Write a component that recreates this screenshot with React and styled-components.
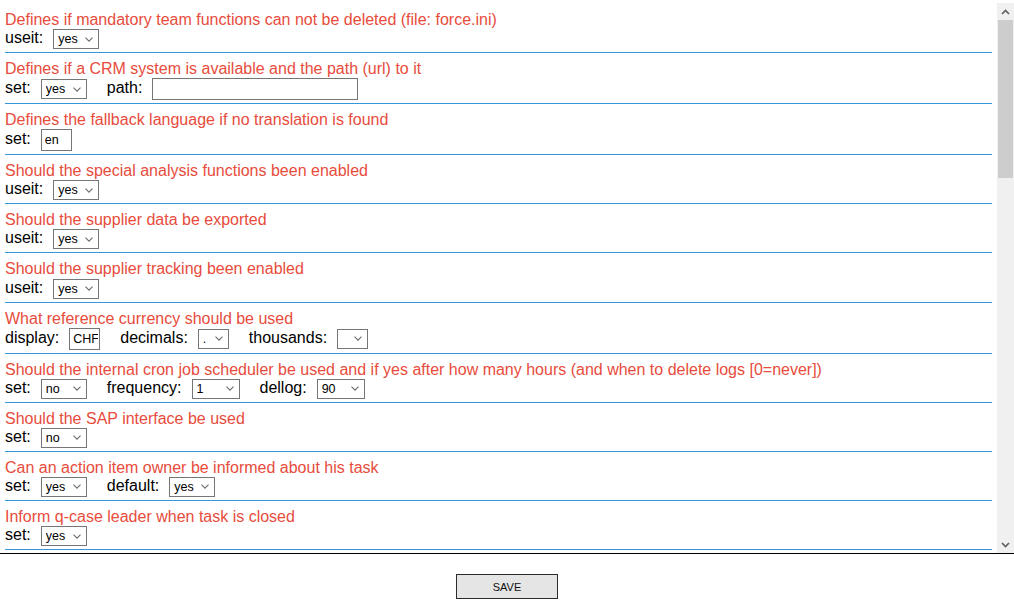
import React from "react";
import styled, { createGlobalStyle } from "styled-components";

const GlobalStyle = createGlobalStyle`
  html, body { margin: 0; padding: 0; background: #fff; }
  body { font-family: "Liberation Sans", Arial, sans-serif; }
`;

const CHEVRON = `url("data:image/svg+xml,${encodeURIComponent(
  "<svg xmlns='http://www.w3.org/2000/svg' width='8' height='5' viewBox='0 0 8 5'><path d='M0.5 0.6 L4 4.1 L7.5 0.6' fill='none' stroke='#6b6b6b' stroke-width='1.1'/></svg>"
)}")`;

const Page = styled.div`
  padding-top: 3px;
  width: 1014px;
`;

const Main = styled.div`
  display: flex;
  height: 550px;
  border-bottom: 1px solid #000;
`;

const ScrollArea = styled.div`
  flex: 1;
  min-width: 0;
  overflow: hidden;
  padding: 1px 5px 0;
`;

const Scrollbar = styled.div`
  width: 17px;
  flex: none;
  display: flex;
  flex-direction: column;
  background: #f0f0f0;
`;

const ScrollButton = styled.div`
  height: 17px;
  display: flex;
  align-items: center;
  justify-content: center;
  color: #606060;
`;

const Thumb = styled.div`
  height: 158px;
  margin: 0 1px;
  background: #cdcdcd;
`;

const Track = styled.div`
  flex: 1;
`;

const Row = styled.div`
  padding: 7px 0 3px;
  border-bottom: 1px solid #3498db;
`;

const Title = styled.div`
  font-size: 16px;
  line-height: 18.1px;
  color: #e74c3c;
  white-space: nowrap;
`;

const Controls = styled.div`
  display: flex;
  align-items: baseline;
  gap: 20px;
`;

const Field = styled.div`
  display: inline-flex;
  align-items: baseline;
  gap: 10px;
`;

const Label = styled.span`
  font-size: 16px;
  line-height: 18px;
  color: #000;
`;

const Select = styled.select`
  box-sizing: border-box;
  appearance: none;
  -webkit-appearance: none;
  width: ${(p) => p.$w}px;
  height: 20px;
  margin: 0;
  padding: 0 14px 0 4px;
  font: 12.5px "Liberation Sans", Arial, sans-serif;
  color: #000;
  background-color: #fff;
  background-image: ${CHEVRON};
  background-repeat: no-repeat;
  background-position: right 5px center;
  background-size: 8px 5px;
  border: 1px solid #767676;
  border-radius: 0;
  outline: none;
`;

const TextInput = styled.input`
  box-sizing: border-box;
  width: ${(p) => p.$w}px;
  height: 22px;
  margin: 0;
  padding: 1px 1px 1px 3px;
  font: 12.5px "Liberation Sans", Arial, sans-serif;
  color: #000;
  background: #fff;
  border: 1px solid #767676;
  border-radius: 0;
  outline: none;
`;

const Footer = styled.div`
  display: flex;
  justify-content: center;
  padding-top: 20px;
`;

const SaveButton = styled.button`
  box-sizing: border-box;
  width: 102px;
  height: 25px;
  margin: 0;
  padding: 0;
  font: 11px "Liberation Sans", Arial, sans-serif;
  color: #111;
  background: #e5e5e5;
  border: 1px solid #2b2b2b;
  border-radius: 0;
`;

const YN = ["yes", "no"];
const sel = (label, value, w = 46, options = YN) => ({ label, kind: "select", value, w, options });
const inp = (label, value, w) => ({ label, kind: "input", value, w });

const rows = [
  { title: "Defines if mandatory team functions can not be deleted (file: force.ini)", fields: [sel("useit:", "yes")] },
  { title: "Defines if a CRM system is available and the path (url) to it", fields: [sel("set:", "yes"), inp("path:", "", 206)] },
  { title: "Defines the fallback language if no translation is found", fields: [inp("set:", "en", 31)] },
  { title: "Should the special analysis functions been enabled", fields: [sel("useit:", "yes")] },
  { title: "Should the supplier data be exported", fields: [sel("useit:", "yes")] },
  { title: "Should the supplier tracking been enabled", fields: [sel("useit:", "yes")] },
  {
    title: "What reference currency should be used",
    fields: [inp("display:", "CHF", 31), sel("decimals:", ".", 31, [".", ","]), sel("thousands:", "", 31, ["", "'", ",", "."])],
  },
  {
    title: "Should the internal cron job scheduler be used and if yes after how many hours (and when to delete logs [0=never])",
    fields: [sel("set:", "no"), sel("frequency:", "1", 48, ["1", "2", "4", "6", "12", "24"]), sel("dellog:", "90", 48, ["0", "30", "60", "90"])],
  },
  { title: "Should the SAP interface be used", fields: [sel("set:", "no")] },
  { title: "Can an action item owner be informed about his task", fields: [sel("set:", "yes"), sel("default:", "yes")] },
  { title: "Inform q-case leader when task is closed", fields: [sel("set:", "yes")] },
];

function FieldControl({ f }) {
  if (f.kind === "input") {
    return <TextInput type="text" $w={f.w} defaultValue={f.value} />;
  }
  return (
    <Select $w={f.w} defaultValue={f.value}>
      {f.options.map((o) => (
        <option key={o} value={o}>
          {o}
        </option>
      ))}
    </Select>
  );
}

const Arrow = ({ up }) => (
  <svg width="9" height="6" viewBox="0 0 9 6">
    <path
      d={up ? "M1 5 L4.5 1.5 L8 5" : "M1 1 L4.5 4.5 L8 1"}
      fill="none"
      stroke="currentColor"
      strokeWidth="1.7"
    />
  </svg>
);

export default function App() {
  return (
    <Page>
      <GlobalStyle />
      <Main>
        <ScrollArea>
          {rows.map((r, i) => (
            <Row key={i}>
              <Title>{r.title}</Title>
              <Controls>
                {r.fields.map((f, j) => (
                  <Field key={j}>
                    <Label>{f.label}</Label>
                    <FieldControl f={f} />
                  </Field>
                ))}
              </Controls>
            </Row>
          ))}
        </ScrollArea>
        <Scrollbar>
          <ScrollButton>
            <Arrow up />
          </ScrollButton>
          <Thumb />
          <Track />
          <ScrollButton>
            <Arrow />
          </ScrollButton>
        </Scrollbar>
      </Main>
      <Footer>
        <SaveButton type="button">SAVE</SaveButton>
      </Footer>
    </Page>
  );
}
